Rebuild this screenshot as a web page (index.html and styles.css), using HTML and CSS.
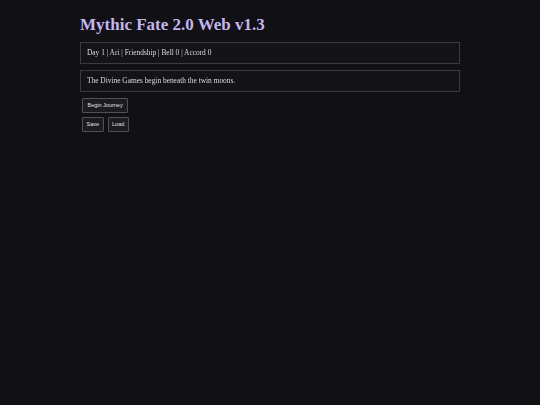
FILE: index.html
```html
<!DOCTYPE html>
<html>
<head>
<meta charset="utf-8">
<link rel="stylesheet" href="styles.css">
</head>
<body>
<div class="app">
  <h1 class="title">Mythic Fate 2.0 Web v1.3</h1>
  <div class="panel status">Day 1 | Ari | Friendship | Bell 0 | Accord 0</div>
  <div class="panel story">The Divine Games begin beneath the twin moons.</div>
  <div class="row"><button class="btn btn-wide">Begin Journey</button></div>
  <div class="row"><button class="btn">Save</button><button class="btn">Load</button></div>
</div>
</body>
</html>
```
FILE: styles.css
```css
html, body {
  margin: 0;
  padding: 0;
  background: #111015;
  height: 100%;
}
.app {
  width: 380px;
  margin: 0 auto;
  padding-top: 15px;
  font-family: "Liberation Serif", "Times New Roman", serif;
  color: #dcdcdc;
}
.title {
  margin: 0 0 7px 0;
  font-size: 17px;
  line-height: 20px;
  font-weight: bold;
  color: #c6b6ee;
}
.panel {
  border: 1px solid #3a3a40;
  background: #141318;
  padding: 0 6px;
  height: 20px;
  line-height: 20px;
  font-size: 7.4px;
  margin-bottom: 6px;
  will-change: transform;
}
.row {
  display: flex;
  gap: 4px;
  margin-bottom: 4px;
  padding-left: 2px;
}
.btn {
  font-family: "Liberation Sans", Arial, sans-serif;
  font-size: 5.5px;
  color: #e0e0e0;
  background: #1c1b20;
  border: 1px solid #505055;
  padding: 0 3.5px;
  height: 15px;
  line-height: 13px;
  border-radius: 1px;
}
.btn-wide { padding: 0 4.5px; }
```
